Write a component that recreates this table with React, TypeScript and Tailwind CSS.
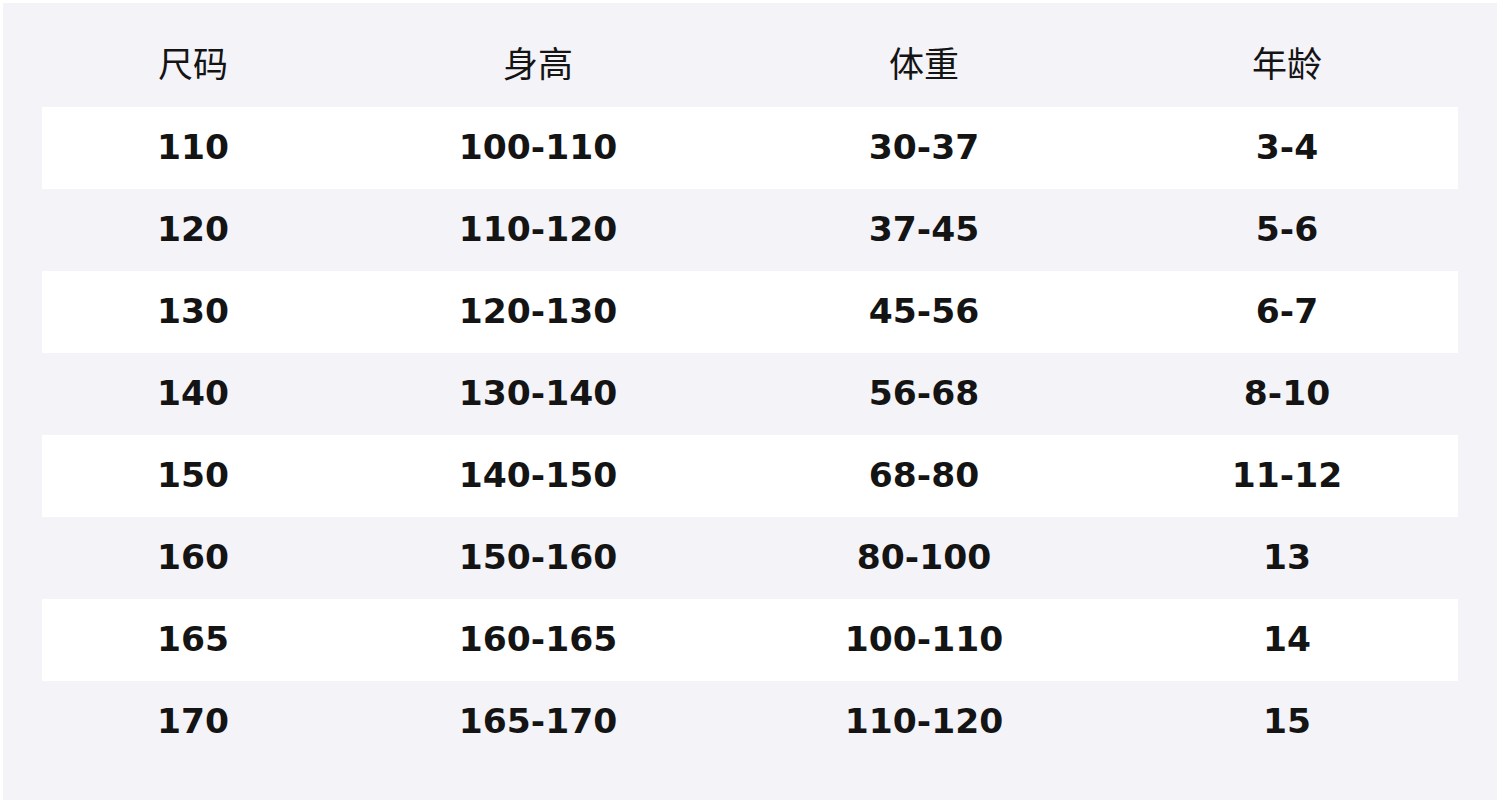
const rows = [
  ["110", "100-110", "30-37", "3-4"],
  ["120", "110-120", "37-45", "5-6"],
  ["130", "120-130", "45-56", "6-7"],
  ["140", "130-140", "56-68", "8-10"],
  ["150", "140-150", "68-80", "11-12"],
  ["160", "150-160", "80-100", "13"],
  ["165", "160-165", "100-110", "14"],
  ["170", "165-170", "110-120", "15"],
];

const headers = ["尺码", "身高", "体重", "年龄"];
const widths = ["w-[302px]", "w-[388px]", "w-[384px]", "w-[342px]"];

export default function App() {
  return (
    <div className="w-[1500px] h-[805px] bg-white p-[3px] pb-[5px]">
      <div className="h-full bg-[#f3f3f8] px-[39px] text-[#141414]">
        <div
          className="flex h-[104px] items-center pt-[14px] text-[35px]"
          style={{ fontFamily: '"Noto Sans CJK SC", "Noto Sans", sans-serif' }}
        >
          {headers.map((h, i) => (
            <div key={h} className={`${widths[i]} text-center`}>
              {h}
            </div>
          ))}
        </div>
        <div style={{ fontFamily: '"DejaVu Sans", sans-serif' }}>
          {rows.map((r, ri) => (
            <div
              key={r[0]}
              className={`flex h-[82px] items-center text-[34.5px] font-bold ${
                ri % 2 === 0 ? "bg-white" : ""
              }`}
            >
              {r.map((c, i) => (
                <div key={i} className={`${widths[i]} text-center`}>
                  {c}
                </div>
              ))}
            </div>
          ))}
        </div>
      </div>
    </div>
  );
}
